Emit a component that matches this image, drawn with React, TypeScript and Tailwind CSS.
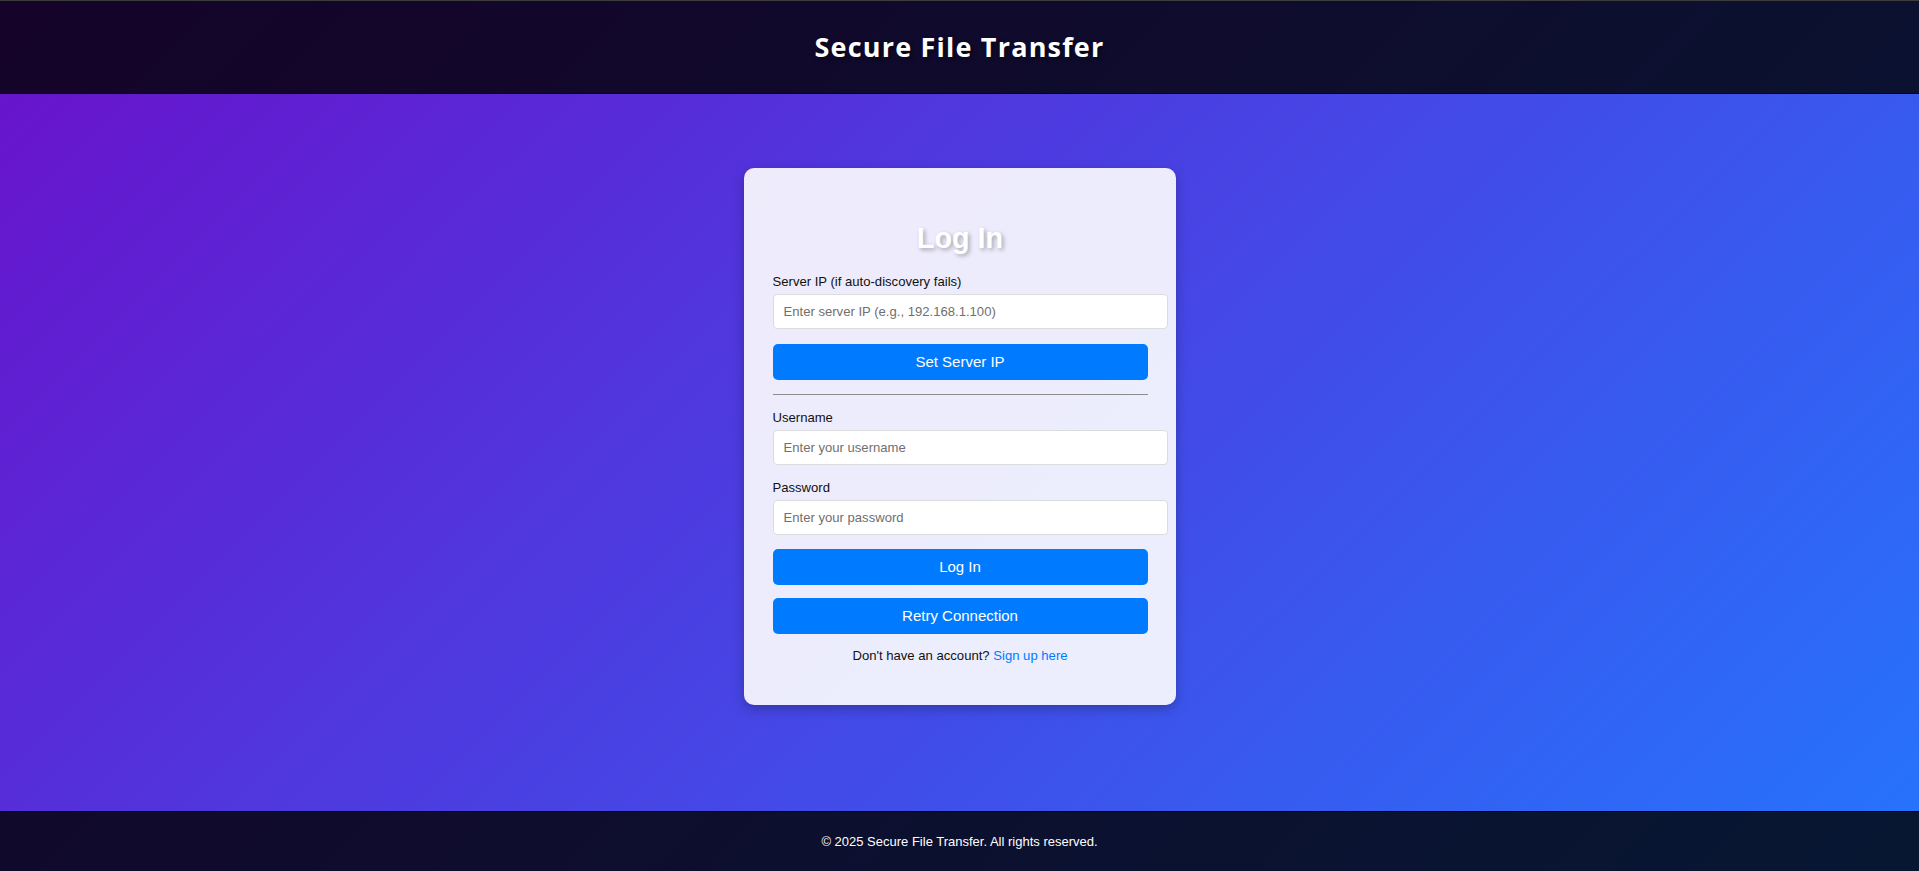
import React from "react";

export default function App() {
  return (
    <div
      className="min-h-[871px] h-[871px] w-full flex flex-col bg-[linear-gradient(135deg,#6a11cb_0%,#2575fc_100%)] text-[#1a1a1a]"
      style={{ fontFamily: '"Liberation Sans", Arial, sans-serif' }}
    >
      <header className="h-[94px] shrink-0 flex items-center justify-center bg-black/80 border-t border-t-[#3d3d3d] border-b border-b-black/70">
        <h1
          className="text-white font-bold text-[27px] tracking-[1.2px] [text-shadow:2px_2px_4px_rgba(0,0,0,0.5)]"
          style={{ fontFamily: '"Open Sans", "Liberation Sans", sans-serif' }}
        >
          Secure File Transfer
        </h1>
      </header>

      <main className="flex-1 flex justify-center pt-[74px]">
        <div className="w-[432px] h-[537px] bg-white/90 rounded-[10px] shadow-[0_4px_12px_rgba(0,0,0,0.25)] pl-[29px] pr-[28px] pt-[53px] pb-[41px] flex flex-col">
          <h2
            className="h-[34px] leading-[34px] text-center text-white font-bold text-[28.8px] mb-[19px] [text-shadow:2px_2px_4px_rgba(0,0,0,0.3)]"
            style={{ fontFamily: '"Liberation Sans", Arial, sans-serif' }}
          >
            Log In
          </h2>

          <label className="block text-[13.1px] leading-[15px] mb-[5px] text-[#111]">
            Server IP (if auto-discovery fails)
          </label>
          <input
            type="text"
            placeholder="Enter server IP (e.g., 192.168.1.100)"
            className="w-[395px] h-[35px] shrink-0 bg-white border border-[#dcdcdc] rounded-[4px] px-[10px] text-[13.1px] placeholder:text-[#6f6f6f] outline-none mb-[15px]"
          />
          <button className="w-[375px] h-[35.5px] shrink-0 bg-[#007bff] text-white text-[15px] rounded-[5px]">
            Set Server IP
          </button>

          <hr className="w-[375px] mt-[14.5px] mb-[15px] border-0 border-t border-t-[#8c8c8c]" />

          <label className="block text-[13.1px] leading-[15px] mb-[4.5px] text-[#111]">
            Username
          </label>
          <input
            type="text"
            placeholder="Enter your username"
            className="w-[395px] h-[35px] shrink-0 bg-white border border-[#dcdcdc] rounded-[4px] px-[10px] text-[13.1px] placeholder:text-[#6f6f6f] outline-none mb-[15px]"
          />

          <label className="block text-[13.1px] leading-[15px] mb-[5px] text-[#111]">
            Password
          </label>
          <input
            type="password"
            placeholder="Enter your password"
            className="w-[395px] h-[35px] shrink-0 bg-white border border-[#dcdcdc] rounded-[4px] px-[10px] text-[13.1px] placeholder:text-[#6f6f6f] outline-none mb-[14.5px]"
          />

          <button className="w-[375px] h-[35.5px] shrink-0 bg-[#007bff] text-white text-[15px] rounded-[5px] mb-[13.5px]">
            Log In
          </button>
          <button className="w-[375px] h-[35.5px] shrink-0 bg-[#007bff] text-white text-[15px] rounded-[5px]">
            Retry Connection
          </button>

          <p className="w-[375px] mt-[14.5px] text-center text-[13.1px] leading-[15px] text-[#111]">
            Don't have an account?{" "}
            <a href="#" className="text-[#007bff]">
              Sign up here
            </a>
          </p>
        </div>
      </main>

      <footer className="h-[60px] shrink-0 flex items-center justify-center bg-black/80 border-t border-t-black">
        <p className="text-white text-[13px]">© 2025 Secure File Transfer. All rights reserved.</p>
      </footer>
    </div>
  );
}
